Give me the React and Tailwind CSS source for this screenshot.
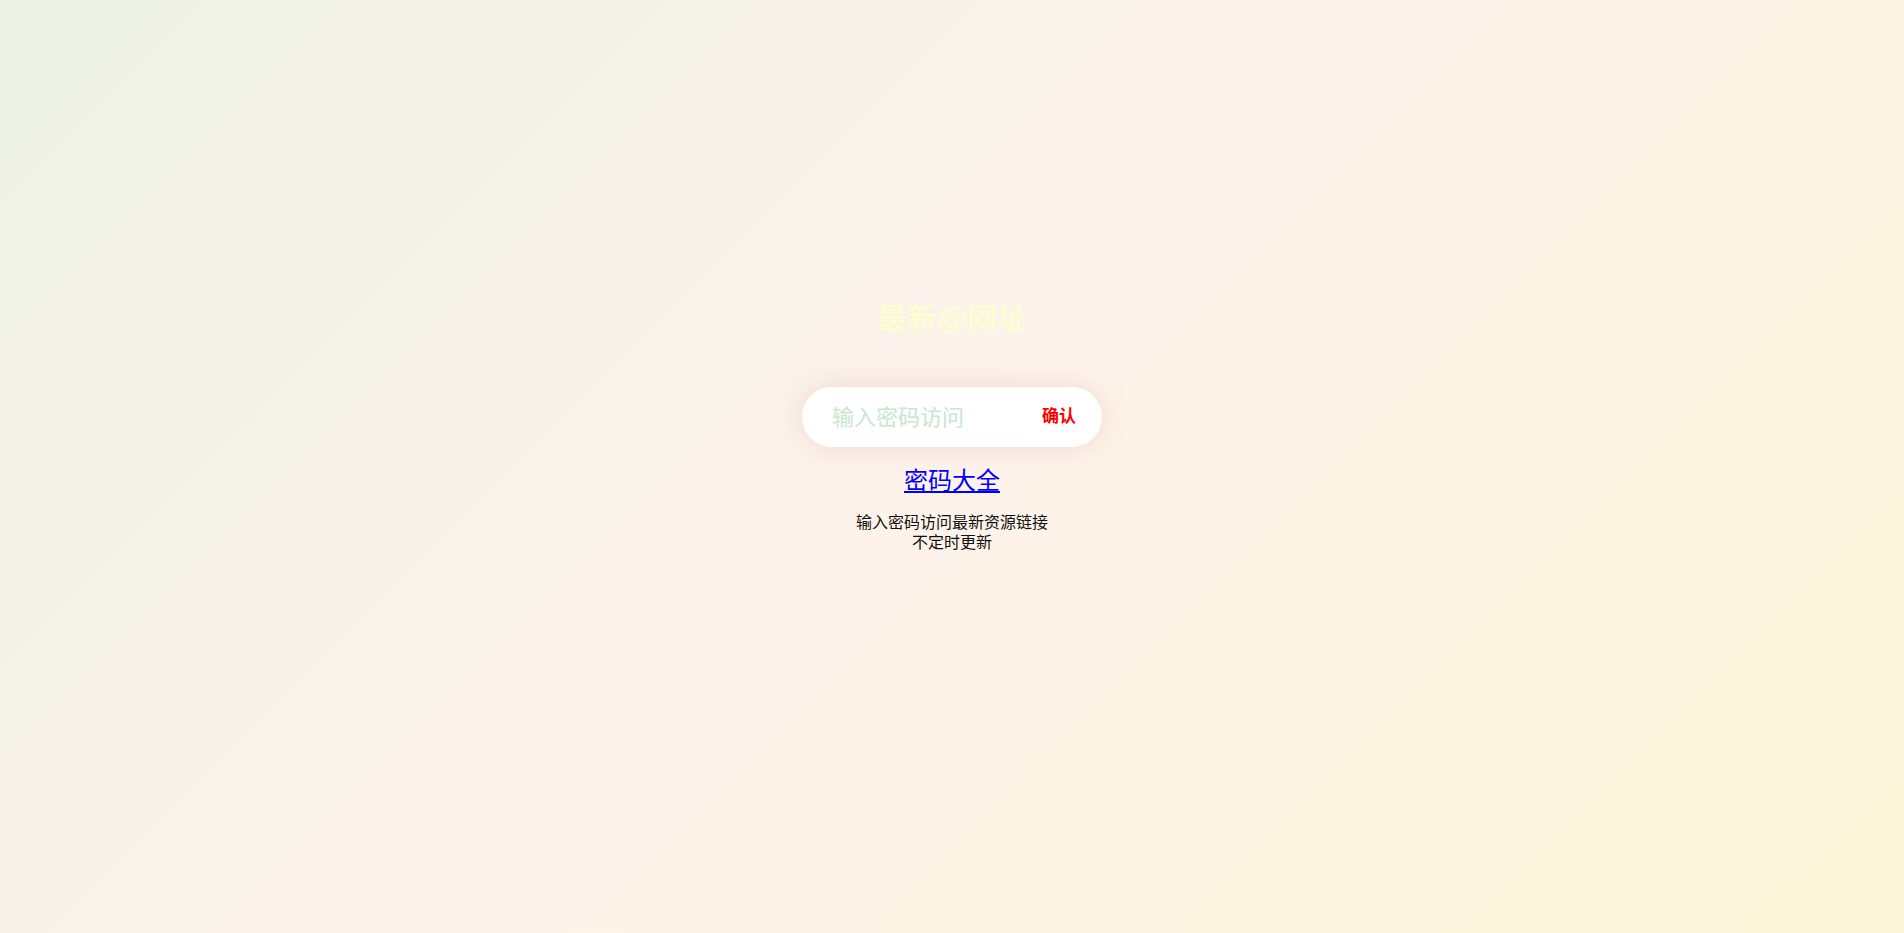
import React from 'react';

const App = () => {
  return (
    <div
      className="min-h-screen w-full bg-[linear-gradient(135deg,#edf1e6,#fdf3eb,#fdf6d9)] flex flex-col items-center pt-[301px]"
      style={{ fontFamily: '"Liberation Sans", "Noto Sans CJK SC", sans-serif' }}
    >
      {/* title */}
      <h1 className="text-[30px] leading-[36px] text-[#ffffc9]">最新@网址</h1>

      {/* password box */}
      <div className="mt-[50px] w-[300px] h-[60px] rounded-full bg-white flex items-center pl-[30px] pr-[26px] shadow-[0_0_26px_rgba(235,180,180,0.45)]">
        <input
          type="password"
          placeholder="输入密码访问"
          className="flex-1 min-w-0 bg-transparent outline-none text-[22px] placeholder:text-[#c6e6d0] text-gray-700"
        />
        <button className="text-[17px] font-bold text-[#ff0000]">确认</button>
      </div>

      <a href="#" className="mt-[16px] text-[24px] leading-[36px] text-[#0000ff] underline">
        密码大全
      </a>

      <div className="mt-[14px] text-[16px] leading-[20px] text-[#111] text-center">
        <p>输入密码访问最新资源链接</p>
        <p>不定时更新</p>
      </div>
    </div>
  );
};

export default App;
